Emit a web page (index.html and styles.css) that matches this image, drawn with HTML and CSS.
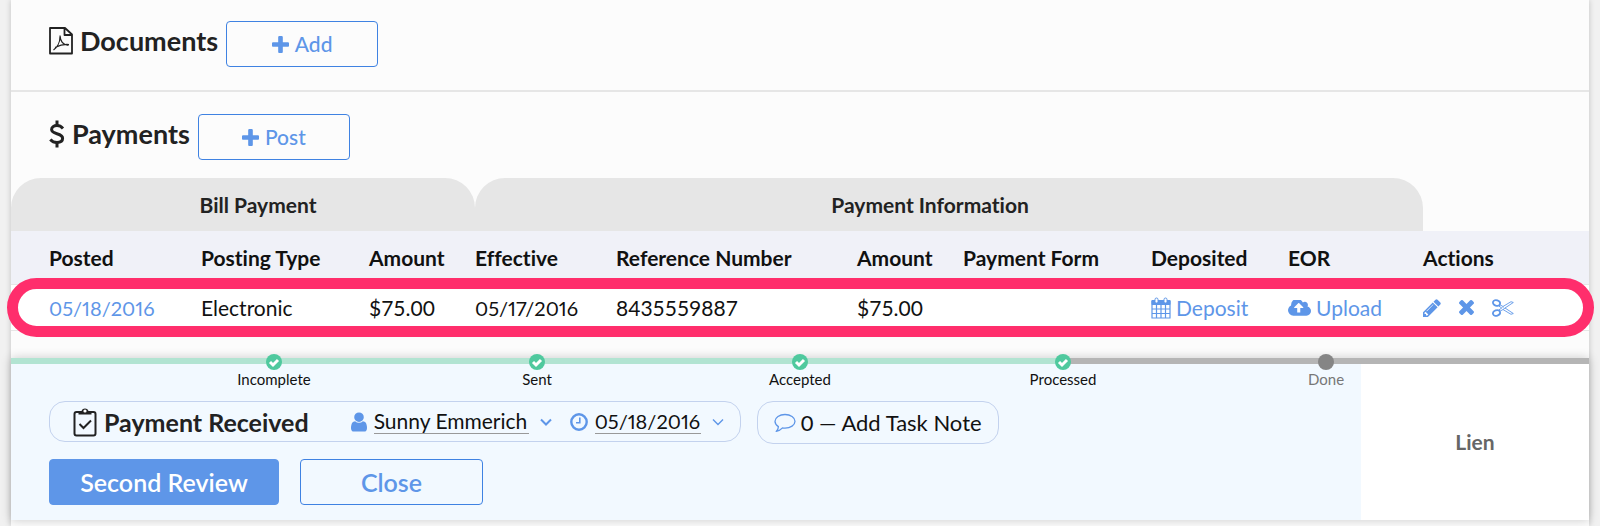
FILE: index.html
```
<!DOCTYPE html>
<html lang="en">
<head>
    <meta charset="UTF-8">
    <meta name="viewport" content="width=device-width, initial-scale=1.0">
    <title>Bill Payments</title>
    <link rel="stylesheet" href="styles.css">
</head>
<body>
    <div class="container">

        <section class="section">
            <h2>
                <svg class="icon-pdf" viewBox="0 0 24 28" fill="none" stroke="#222" aria-hidden="true">
                    <path stroke-width="1.800" stroke-linejoin="round" d="M1 1h15l7 6.500v19H1zM15.500 1.500v6.500h7"/>
                    <path stroke-width="1.200" d="M4.500 23c3-2 6.500-7 6.500-13.500M11 8.500c.3 5.500 3 9.500 8.500 9.800M6 20.500c4-2 9-3.500 14-3"/>
                </svg>
                Documents
            </h2>
            <button type="button" class="btn btn-small">
                <svg class="icon-plus" viewBox="192 128 1408 1408" fill="currentColor" aria-hidden="true"><path d="M1600 736v192q0 40-28 68t-68 28h-416v416q0 40-28 68t-68 28h-192q-40 0-68-28t-28-68v-416h-416q-40 0-68-28t-28-68v-192q0-40 28-68t68-28h416v-416q0-40 28-68t68-28h192q40 0 68 28t28 68v416h416q40 0 68 28t28 68z"/></svg>
                Add
            </button>
        </section>

        <section class="section">
            <h2>
                <svg class="icon-dollar" viewBox="0 0 16 28" fill="none" stroke="#222" stroke-width="3" aria-hidden="true">
                    <path d="M14 8.500C12.500 6.800 10.500 5.600 8 5.600c-3.200 0-5.400 1.600-5.400 4 0 5.400 11 2.800 11 8.600 0 2.600-2.200 4.200-5.600 4.200-2.700 0-5-1.100-6.700-3"/>
                    <path d="M8 .5v5M8 22.500v5"/>
                </svg>
                Payments
            </h2>
            <button type="button" class="btn btn-small">
                <svg class="icon-plus" viewBox="192 128 1408 1408" fill="currentColor" aria-hidden="true"><path d="M1600 736v192q0 40-28 68t-68 28h-416v416q0 40-28 68t-68 28h-192q-40 0-68-28t-28-68v-416h-416q-40 0-68-28t-28-68v-192q0-40 28-68t68-28h416v-416q0-40 28-68t68-28h192q40 0 68 28t28 68v416h416q40 0 68 28t28 68z"/></svg>
                Post
            </button>
        </section>

        <table class="payments">
            <colgroup>
                <col class="c-posted">
                <col class="c-type">
                <col class="c-amount">
                <col class="c-effective">
                <col class="c-reference">
                <col class="c-amount">
                <col class="c-form">
                <col class="c-deposited">
                <col class="c-eor">
                <col>
            </colgroup>
            <thead>
                <tr class="groups">
                    <th colspan="3" scope="colgroup" class="group-bill">Bill Payment</th>
                    <th colspan="6" scope="colgroup" class="group-info">Payment Information</th>
                    <td></td>
                </tr>
                <tr class="columns">
                    <th scope="col">Posted</th>
                    <th scope="col">Posting Type</th>
                    <th scope="col">Amount</th>
                    <th scope="col">Effective</th>
                    <th scope="col">Reference Number</th>
                    <th scope="col">Amount</th>
                    <th scope="col">Payment Form</th>
                    <th scope="col">Deposited</th>
                    <th scope="col">EOR</th>
                    <th scope="col">Actions</th>
                </tr>
            </thead>
            <tbody>
                <tr class="highlight">
                    <td><a href="#" class="date">05/18/2016</a></td>
                    <td>Electronic</td>
                    <td>$75.00</td>
                    <td class="date">05/17/2016</td>
                    <td>8435559887</td>
                    <td>$75.00</td>
                    <td></td>
                    <td>
                        <a href="#" class="link">
                            <svg class="icon-calendar" viewBox="0 0 20 22" fill="none" stroke="currentColor" aria-hidden="true">
                                <path fill="currentColor" d="M1 3.500h18v4H1z"/>
                                <path stroke-width="1.200" d="M1 4h18v17H1zM1 12h18M1 16.500h18M5.500 7.500V21M10 7.500V21M14.500 7.500V21"/>
                                <rect x="4" y="1" width="3" height="5" rx="1.500" fill="#fff"/>
                                <rect x="13" y="1" width="3" height="5" rx="1.500" fill="#fff"/>
                            </svg>
                            Deposit
                        </a>
                    </td>
                    <td>
                        <a href="#" class="link">
                            <svg class="icon-cloud" viewBox="-64 256 1920 1280" fill="currentColor" aria-hidden="true"><path d="M1216 864q0-14-9-23l-352-352q-9-9-23-9t-23 9l-351 351q-10 12-10 24 0 14 9 23t23 9h224v352q0 13 9.500 22.500t22.500 9.500h192q13 0 22.500-9.500t9.500-22.500v-352h224q13 0 22.500-9.500t9.500-22.500zm640 288q0 159-112.500 271.500t-271.500 112.500h-1088q-185 0-316.500-131.500t-131.500-316.500q0-130 70-240t188-165q-2-30-2-43 0-212 150-362t362-150q156 0 285.500 87t188.500 231q71-62 166-62 106 0 181 75t75 181q0 76-41 138 130 31 213.500 135.500t83.500 238.500z"/></svg>
                            Upload
                        </a>
                    </td>
                    <td>
                        <div class="actions">
                            <button type="button" aria-label="Edit">
                                <svg class="icon-pencil" viewBox="128 128 1536 1536" fill="currentColor" aria-hidden="true"><path d="M491 1536l91-91-235-235-91 91v107h128v128h107zm523-928q0-22-22-22-10 0-17 7l-542 542q-7 7-7 17 0 22 22 22 10 0 17-7l542-542q7-7 7-17zm-54-192l416 416-832 832h-416v-416zm683 96q0 53-37 90l-166 166-416-416 166-165q36-38 90-38 53 0 91 38l235 234q37 39 37 91z"/></svg>
                            </button>
                            <button type="button" aria-label="Delete">
                                <svg class="icon-times" viewBox="302 366 1188 1188" fill="currentColor" aria-hidden="true"><path d="M1490 1322q0 40-28 68l-136 136q-28 28-68 28t-68-28l-294-294-294 294q-28 28-68 28t-68-28l-136-136q-28-28-28-68t28-68l294-294-294-294q-28-28-28-68t28-68l136-136q28-28 68-28t68 28l294 294 294-294q28-28 68-28t68 28l136 136q28 28 28 68t-28 68l-294 294 294 294q28 28 28 68z"/></svg>
                            </button>
                            <button type="button" aria-label="Split">
                                <svg class="icon-scissors" viewBox="0 0 22 18" fill="none" stroke="currentColor" aria-hidden="true">
                                    <ellipse cx="4.500" cy="4" rx="3.600" ry="2.700" transform="rotate(20 4.500 4)" stroke-width="1.800"/>
                                    <ellipse cx="4.500" cy="14" rx="3.600" ry="2.700" transform="rotate(-20 4.500 14)" stroke-width="1.800"/>
                                    <path stroke-width=".9" stroke-linejoin="round" d="M7.500 5.500l3.500 2 8-4.800 2.300.8-8.300 5.500 8.300 5.500-2.300.8-8-4.800-3.500 2M7 7.200l2.800 1.800L7 10.800M11 7.500v1.300M11 10.500l2-1.500"/>
                                </svg>
                            </button>
                        </div>
                        <span class="highlight-ring"></span>
                    </td>
                </tr>
            </tbody>
        </table>

        <div class="task">
            <ol class="progress">
                <li class="done">
                    <svg viewBox="0 0 16 16" aria-hidden="true"><circle cx="8" cy="8" r="8"/><path d="M4 8l3 3 5-5"/></svg>
                    Incomplete
                </li>
                <li class="done">
                    <svg viewBox="0 0 16 16" aria-hidden="true"><circle cx="8" cy="8" r="8"/><path d="M4 8l3 3 5-5"/></svg>
                    Sent
                </li>
                <li class="done">
                    <svg viewBox="0 0 16 16" aria-hidden="true"><circle cx="8" cy="8" r="8"/><path d="M4 8l3 3 5-5"/></svg>
                    Accepted
                </li>
                <li class="done">
                    <svg viewBox="0 0 16 16" aria-hidden="true"><circle cx="8" cy="8" r="8"/><path d="M4 8l3 3 5-5"/></svg>
                    Processed
                </li>
                <li>
                    <svg viewBox="0 0 16 16" aria-hidden="true"><circle cx="8" cy="8" r="8"/></svg>
                    Done
                </li>
            </ol>

            <div class="task-body">
                <div class="task-main">
                    <div class="task-row">
                        <div class="pill">
                            <h3>
                                <svg class="icon-clipboard" viewBox="0 0 24 30" fill="none" stroke="#222" stroke-width="2" aria-hidden="true">
                                    <rect x="1.500" y="5" width="21" height="23.500" rx="2"/>
                                    <path fill="#222" stroke="none" d="M5.500 7.500V5.200l3-.9a3.600 3.600 0 0 1 7 0l3 .9v2.300z"/>
                                    <circle cx="12" cy="4" r="1.600" fill="#fff" stroke="none"/>
                                    <path d="M6.500 17l4 4 7.500-7.500"/>
                                </svg>
                                Payment Received
                            </h3>
                            <div class="picker picker-user">
                                <svg class="icon-user" viewBox="256 128 1280 1536" fill="currentColor" aria-hidden="true"><path d="M1536 1399q0 109-62.500 187t-150.500 78h-854q-88 0-150.500-78t-62.500-187q0-85 8.500-160.500t31.500-152 58.500-131 94-89 134.500-34.500q131 128 313 128t313-128q76 0 134.500 34.500t94 89 58.500 131 31.500 152 8.500 160.500zm-256-887q0 159-112.500 271.500t-271.500 112.500-271.500-112.500-112.500-271.500 112.500-271.500 271.500-112.500 271.500 112.500 112.500 271.500z"/></svg>
                                <select aria-label="Assigned to">
                                    <option>Sunny Emmerich</option>
                                </select>
                                <svg class="icon-chevron" viewBox="0 0 12 8" aria-hidden="true"><path stroke-width="2" d="M1 1.500l5 5 5-5"/></svg>
                            </div>
                            <div class="picker">
                                <svg class="icon-clock" viewBox="0 0 18 18" fill="none" stroke="currentColor" aria-hidden="true"><circle cx="9" cy="9" r="7.700" stroke-width="2.400"/><path stroke-width="1.600" d="M9.800 4.500v5.300H6"/></svg>
                                <select aria-label="Due date" class="date">
                                    <option>05/18/2016</option>
                                </select>
                                <svg class="icon-chevron" viewBox="0 0 12 8" aria-hidden="true"><path stroke-width="1.400" d="M1 1.500l5 5 5-5"/></svg>
                            </div>
                        </div>
                        <button type="button" class="note">
                            <svg class="icon-comment" viewBox="0 0 22 20" fill="none" stroke="currentColor" stroke-width="1.300" stroke-linejoin="round" aria-hidden="true"><path d="M11 1.500c5.500 0 10 3 10 6.800s-4.500 6.800-10 6.800c-.9 0-1.700 0-2.500-.2-1.700 1.900-3.700 3-6.300 3.500 1.400-1.200 2.100-2.700 2.200-4.800C2.300 12.300 1 10.400 1 8.300c0-3.800 4.500-6.800 10-6.800z"/></svg>
                            0 — Add Task Note
                        </button>
                    </div>
                    <div class="task-buttons">
                        <button type="button" class="btn btn-primary">Second Review</button>
                        <button type="button" class="btn btn-close">Close</button>
                    </div>
                </div>
                <div class="task-side">Lien</div>
            </div>
        </div>

    </div>
</body>
</html>
```
FILE: styles.css
```
* {
    box-sizing: border-box;
}

body {
    margin: 0;
    font-family: Lato, 'Liberation Sans', sans-serif;
    font-size: 21px;
    font-variant-ligatures: none;
    line-height: 24px;
    color: #111;
    background-color: #f1f1f1;
}

h2, h3 {
    margin: 0;
    font-weight: 700;
    color: #222;
}

h2 {
    display: flex;
    align-items: center;
    gap: 7px;
    font-size: 27px;
    line-height: 40px;
}

h3 {
    display: flex;
    align-items: center;
    gap: 7px;
    font-size: 25px;
}

a {
    color: #5e96e8;
    text-decoration: none;
}

button, select {
    font: inherit;
    color: inherit;
    cursor: pointer;
}

svg {
    display: block;
    flex: none;
}

.payments .date, .picker .date {
    font-size: 20px;
    font-variant-numeric: proportional-nums;
}

.container {
    margin: 0 11px;
    min-height: 100vh;
    background-color: #fcfcfc;
    box-shadow: 0 0 6px rgba(0, 0, 0, 0.2);
}

/* Documents and Payments headings */
.section {
    display: flex;
    align-items: flex-start;
    gap: 8px;
    padding: 22px 38px 18px;
}

.section:first-child {
    padding-top: 21px;
    padding-bottom: 23px;
    border-bottom: 2px solid #e6e6e6;
}

.btn {
    display: flex;
    align-items: center;
    justify-content: center;
    gap: 6px;
    height: 46px;
    padding: 0;
    border: 1px solid #3f82e2;
    border-radius: 4px;
    background: none;
    color: #5e96e8;
    font-size: 25px;
    font-weight: 600;
}

.btn-small {
    width: 152px;
    font-size: 21px;
    font-weight: 500;
}

.btn-primary {
    width: 230px;
    border-color: #5e96e8;
    background-color: #5e96e8;
    color: #fff;
}

.btn-close {
    width: 183px;
}

/* Payments table */
.payments {
    width: 100%;
    border-collapse: separate;
    border-spacing: 0;
    table-layout: fixed;
}

.c-posted { width: 190px; }
.c-type { width: 168px; }
.c-amount { width: 106px; }
.c-effective { width: 141px; }
.c-reference { width: 241px; }
.c-form { width: 188px; }
.c-deposited { width: 137px; }
.c-eor { width: 135px; }

.payments th, .payments td {
    padding: 0;
    text-align: left;
    white-space: nowrap;
}

.payments th {
    font-size: 21px;
    font-weight: 700;
}

.payments .groups th {
    height: 53px;
    border-radius: 30px 30px 0 0;
    background-color: #e6e6e6;
    color: #222;
    text-align: center;
}

.payments .group-bill {
    padding-left: 30px;
}

.payments .group-info {
    padding-right: 38px;
}

.columns th {
    height: 53px;
    background-color: #f0f1f8;
}

.payments .columns th:first-child,
.payments .highlight td:first-child {
    padding-left: 38px;
}

.highlight {
    position: relative;
}

.highlight td {
    height: 47px;
    border-top: 1px solid #e6e6e6;
    border-bottom: 1px solid #e6e6e6;
    background-color: #fff;
}

.highlight-ring {
    position: absolute;
    inset: -6px -5px -6px -4px;
    border: 11px solid #ff2e6c;
    border-radius: 30px;
    pointer-events: none;
}

.link, .actions {
    display: flex;
    align-items: center;
    gap: 5px;
}

.actions {
    gap: 18px;
}

.actions button {
    padding: 0;
    border: 0;
    background: none;
    color: #5e96e8;
}

/* Task panel */
.task {
    margin-top: 27px;
    background-color: #fff;
    box-shadow: 0 0 10px rgba(0, 0, 0, 0.2);
}

/* Half a step of padding on each side puts the dots on the sixths */
.progress {
    display: grid;
    grid-template-columns: repeat(5, 1fr);
    isolation: isolate;
    height: 6px;
    margin: 0;
    padding: 0 calc(100% / 12);
    list-style: none;
    background-color: #b5b5b5;
    font-size: 15px;
    line-height: 18px;
    color: #777;
}

.progress li {
    position: relative;
    display: flex;
    flex-direction: column;
    align-items: center;
    margin-top: -4px;
}

.progress .done {
    color: #111;
}

.progress .done::before {
    content: "";
    position: absolute;
    z-index: -1;
    top: 4px;
    right: 50%;
    width: 100%;
    height: 6px;
    background-color: #b2e4d2;
}

.progress svg {
    width: 16px;
    height: 16px;
    fill: #858585;
}

.progress .done svg {
    fill: #4fc99e;
}

.progress path {
    fill: none;
    stroke: #fff;
    stroke-width: 3;
}

.task-body {
    display: flex;
}

.task-main {
    flex: 1;
    padding: 37px 38px 15px;
    background-color: #f2f9ff;
}

.task-side {
    display: flex;
    align-items: center;
    justify-content: center;
    width: 228px;
    font-weight: 700;
    color: #666;
}

.task-row {
    display: flex;
    align-items: flex-start;
    gap: 16px;
    margin-bottom: 15px;
}

.pill, .note {
    display: flex;
    align-items: center;
    height: 41px;
    padding: 0 16px;
    border: 1px solid #c3d2ee;
    border-radius: 16px;
    background: none;
}

.pill {
    gap: 18px;
    padding-left: 23px;
}

.note {
    gap: 5px;
    height: 43px;
    font-size: 22px;
}

.picker {
    display: flex;
    align-items: center;
    gap: 7px;
}

.picker-user {
    margin-left: 24px;
}

.picker select {
    appearance: none;
    padding: 0;
    border: 0;
    border-bottom: 1px solid #999;
    border-radius: 0;
    background: none;
}

.picker .icon-chevron {
    margin-left: 4px;
}

.task-buttons {
    display: flex;
    gap: 21px;
}

/* Icons */
.icon-pdf { width: 24px; height: 28px; }
.icon-dollar { width: 16px; height: 28px; }
.icon-plus { width: 17px; height: 17px; }
.icon-calendar { width: 20px; height: 22px; }
.icon-cloud { width: 23px; height: 16px; }
.icon-pencil { width: 18px; height: 18px; }
.icon-times { width: 15px; height: 15px; }
.icon-scissors { width: 22px; height: 18px; }
.icon-clipboard { width: 24px; height: 30px; }
.icon-user { width: 16px; height: 20px; }
.icon-clock { width: 18px; height: 18px; }
.icon-comment { width: 22px; height: 20px; }
.icon-chevron { width: 12px; height: 8px; fill: none; stroke: #5e96e8; }

.icon-user, .icon-clock, .icon-comment {
    color: #5e96e8;
}
```
